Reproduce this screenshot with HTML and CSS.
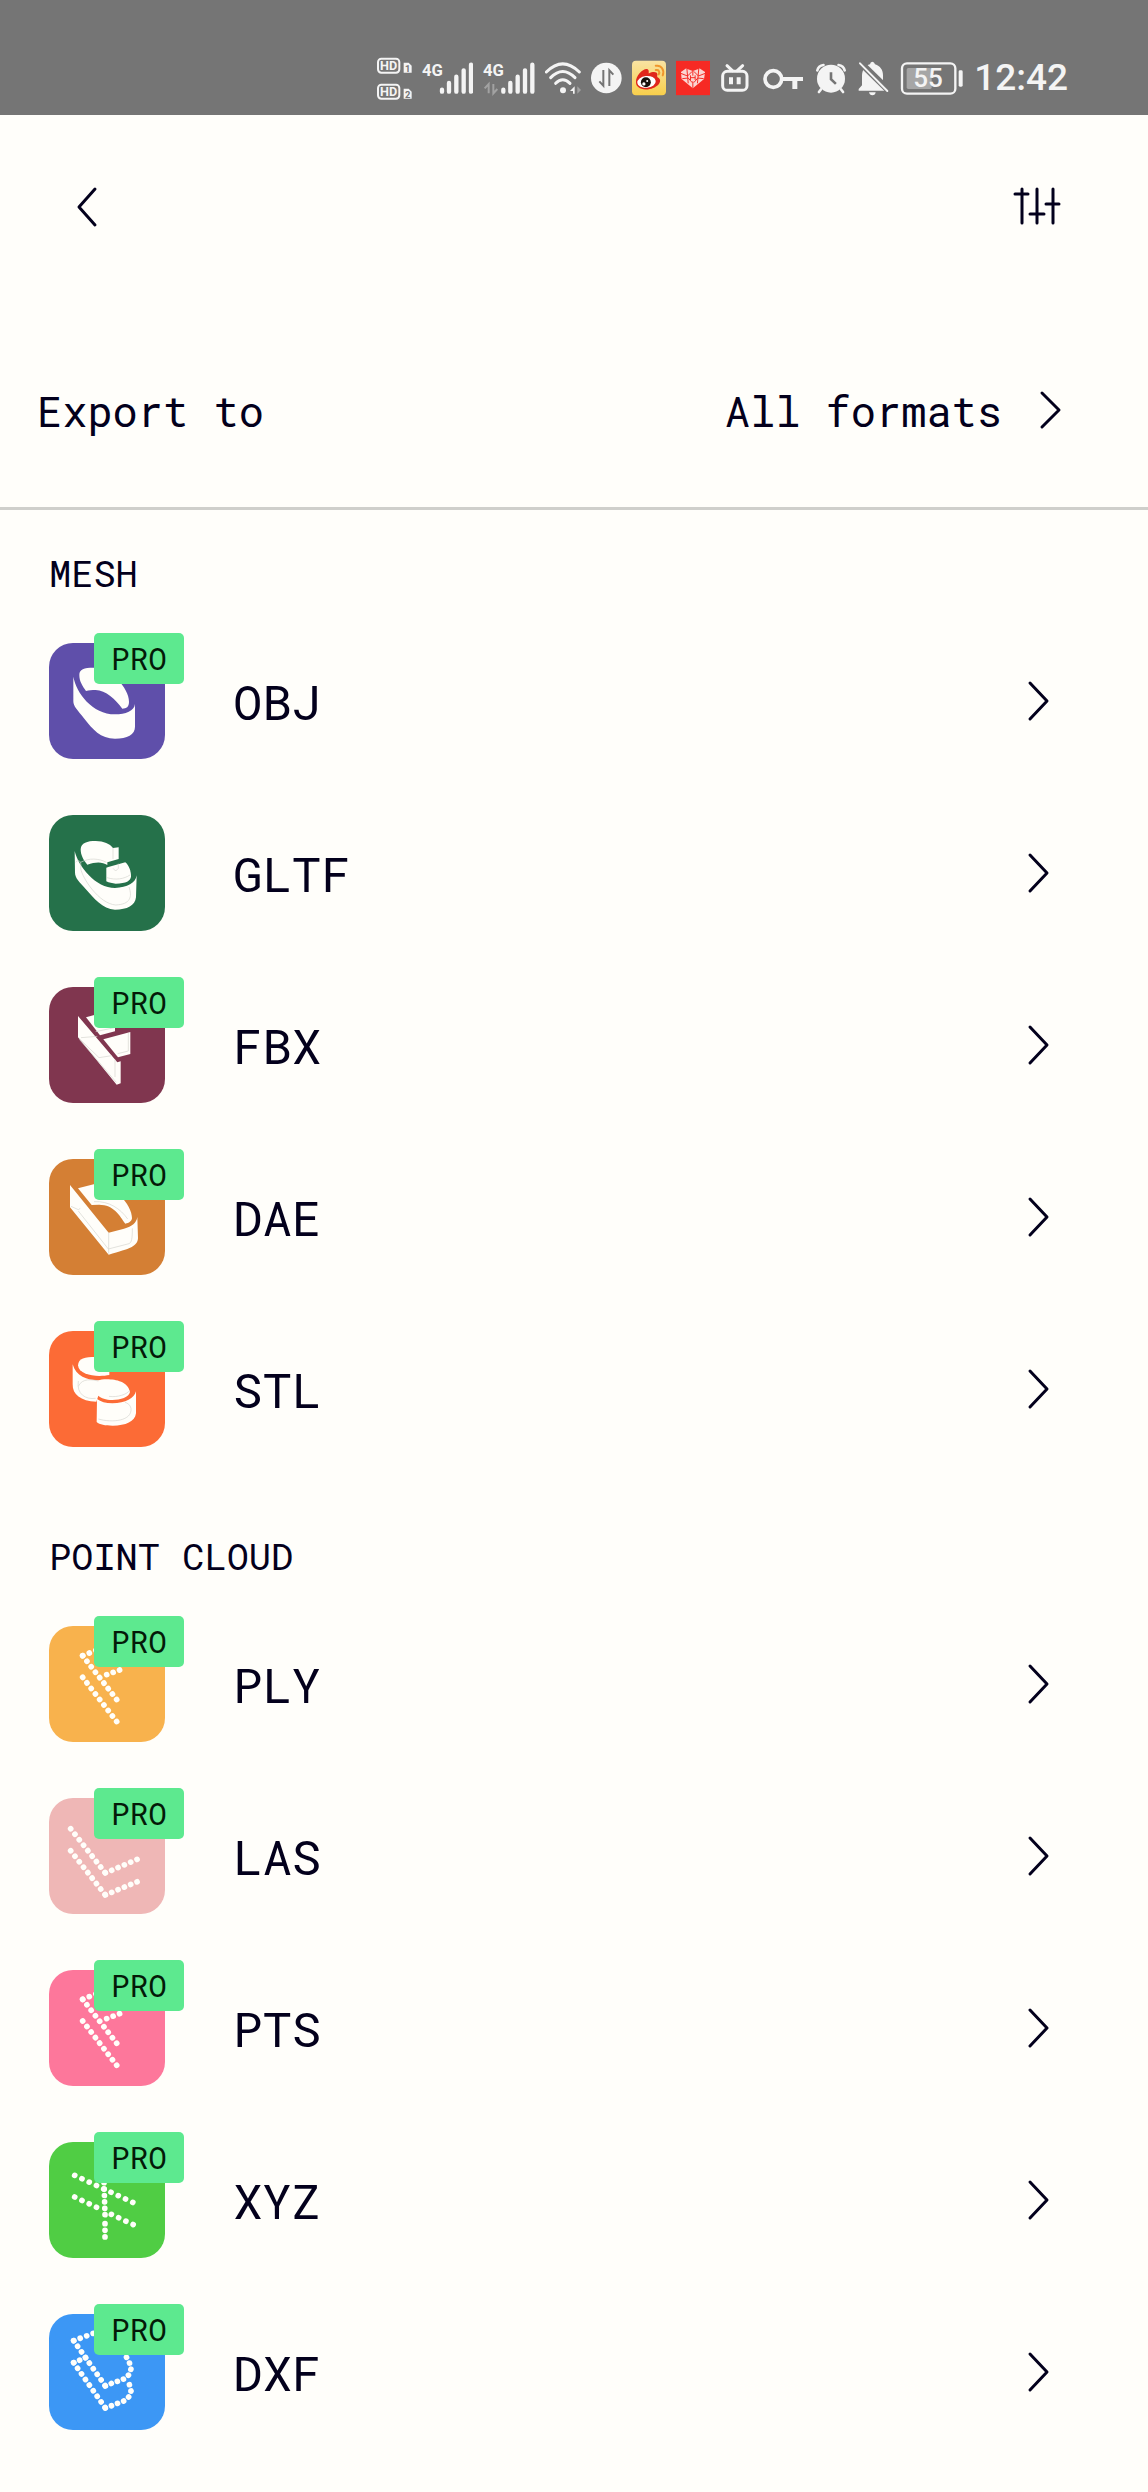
FILE: index.html
```html
<!DOCTYPE html>
<html lang="en">
<head>
    <meta charset="utf-8" />
    <meta name="viewport" content="width=device-width, initial-scale=1" />
    <title>Export</title>
    <link rel="stylesheet" href="styles.css">
</head>
<body>
    <!-- status bar -->
    <div class="statusbar">
        <svg width="35" height="44" viewBox="27 46 105 132">
            <g fill="none" stroke="#f4f4f4" stroke-width="6">
                <rect x="30" y="54" width="64" height="42" rx="10" />
                <rect x="30" y="132" width="64" height="42" rx="10" />
            </g>
            <path d="M107 66h15l9 9v21h-24zM107 144h15l9 9v21h-24z" fill="#f4f4f4" />
            <text class="hd" x="62" y="89" text-anchor="middle">HD</text>
            <text class="hd" x="62" y="167" text-anchor="middle">HD</text>
            <text class="sim" x="119" y="93" text-anchor="middle">1</text>
            <text class="sim" x="119" y="171" text-anchor="middle">2</text>
        </svg>
        <svg width="51" height="44" viewBox="160 46 153 132">
            <text class="net" x="160" y="107">4G</text>
            <path class="bars" d="M220 147v6M241 127v26M263 108v45M285 89v64M307 72v81" />
        </svg>
        <svg width="52" height="44" viewBox="345 46 156 132">
            <text class="net" x="345" y="107">4G</text>
            <path d="M362 158v-28l-12 13M376 130v28l12-13" fill="none" stroke="#a2a2a2" stroke-width="6" />
            <path class="bars" d="M406 147v6M427 127v26M449 108v45M471 89v64M493 72v81" />
        </svg>
        <svg width="36" height="44" viewBox="530 46 108 132">
            <g fill="none" stroke="#f4f4f4" stroke-width="9" stroke-linecap="round">
                <path d="M534 94Q583 45 633 94" />
                <path d="M547 111Q583 74 620 111" />
                <path d="M562 128Q583 106 605 128" />
            </g>
            <circle cx="584" cy="149" r="9" fill="#f4f4f4" />
            <path d="M619 137v22h-5v-8h-9z" fill="#f4f4f4" />
            <path d="M627 137v22l11-11z" fill="#a2a2a2" />
        </svg>
        <svg width="31" height="44" viewBox="669 46 93 132">
            <circle cx="715" cy="112" r="46" fill="#f4f4f4" />
            <path d="M706 88v47l-12-13M724 136V89l12 13" fill="none" stroke="#757575" stroke-width="6" />
        </svg>
        <svg width="34" height="44" viewBox="792 46 103 132">
            <defs>
                <linearGradient id="gold" x1="0" y1="0" x2="0" y2="1">
                    <stop offset="0" stop-color="#f9e3a2" />
                    <stop offset="1" stop-color="#f8cf4c" />
                </linearGradient>
            </defs>
            <rect x="792" y="60" width="103" height="104" rx="12" fill="url(#gold)" />
            <path d="M804 125C803 105 825 83 838 85C845 88 842 96 843 98C855 92 868 92 869 101C869 106 866 109 873 112C886 122 868 146 834 147C815 146 804 138 804 125Z" fill="#e0261c" />
            <ellipse cx="836" cy="124" rx="28" ry="18" fill="#fff" transform="rotate(-6 836 124)" />
            <circle cx="834" cy="125" r="15" fill="#16100c" />
            <circle cx="828" cy="130" r="5" fill="#fff" />
            <circle cx="838" cy="121" r="3" fill="#fff" />
            <path d="M864 75C881 72 891 88 885 104M864 88C873 86 877 93 873 101" fill="none" stroke="#f0962c" stroke-width="6" stroke-linecap="round" />
        </svg>
        <svg width="34" height="44" viewBox="922 46 103 132">
            <rect x="922" y="60" width="103" height="104" fill="#f62a24" />
            <path d="M973 143L939 115L937 94L952 83L973 91L994 83L1010 94L1007 115Z" fill="#fbd5d2" />
            <path d="M973 91v14M973 122v20M937 98l20 8 14-14M1010 98l-20 8-14-14M941 114l18-2 12 14M1006 114l-18-2-12 14M955 84l4 44M991 84l-4 44M966 104v14M980 104v14M966 111h14" fill="none" stroke="#f62a24" stroke-width="3" />
        </svg>
        <svg width="30" height="44" viewBox="8 46 90 132">
            <g fill="none" stroke="#f4f4f4" stroke-width="9" stroke-linecap="round">
                <rect x="16" y="92" width="73" height="57" rx="14" />
                <path d="M29 75l16 15M76 75L60 90" />
                <path d="M41 110v21M64 110v21" stroke-width="12" stroke-linecap="butt" />
            </g>
        </svg>
        <svg width="46" height="44" viewBox="128 46 138 132">
            <circle cx="168" cy="115" r="25" fill="none" stroke="#f4f4f4" stroke-width="11" />
            <path d="M193 109h64v12h-17v24h-15v-24h-32z" fill="#f4f4f4" />
        </svg>
        <svg width="30" height="44" viewBox="293 46 92 132">
            <circle cx="339" cy="114" r="43" fill="#f4f4f4" />
            <g fill="none" stroke="#f4f4f4" stroke-width="8" stroke-linecap="round">
                <path d="M297 89Q300 74 316 72M381 89Q378 74 362 72" />
                <path d="M308 147l-6 8M370 147l6 8" />
            </g>
            <path d="M339 94v22l15 14" fill="none" stroke="#757575" stroke-width="8" />
        </svg>
        <svg width="34" height="44" viewBox="414 46 102 132">
            <path d="M422 150V145L432 134V104C433 87 442 75 456 71Q457 63 463 63Q469 63 471 71C487 76 495 88 495 104V134L504 145V150ZM453 155h20Q472 164 463 164Q455 164 453 155Z" fill="#f4f4f4" />
            <path d="M421 60L514 151" stroke="#757575" stroke-width="20" />
            <path d="M426 68L508 151" stroke="#f4f4f4" stroke-width="6" stroke-linecap="round" />
        </svg>
        <svg width="64" height="44" viewBox="546 46 192 132">
            <rect x="552" y="68" width="160" height="91" rx="15" fill="none" stroke="#f4f4f4" stroke-width="7" />
            <rect x="566" y="82" width="75" height="63" rx="5" fill="#a6a6a6" />
            <rect x="722" y="89" width="12" height="49" rx="4" fill="#f4f4f4" />
            <text class="level" x="630" y="140" text-anchor="middle">55</text>
        </svg>
        <span class="clock">12:42</span>
    </div>

    <!-- top buttons -->
    <header class="toolbar">
        <button type="button" class="iconbtn" aria-label="Back">
            <svg width="24" height="44" viewBox="0 0 24 44"><path class="line" d="M20 4L4 22L20 40" /></svg>
        </button>
        <button type="button" class="iconbtn" aria-label="Filters">
            <svg width="48" height="44" viewBox="0 0 48 44"><path class="line" d="M9 4v34M2 9h13M24 4v34M17 29h14M40 4v34M33 19h13" /></svg>
        </button>
    </header>

    <div class="exportbar">
        <h1 class="exportbar-title">Export to</h1>
        <button type="button" class="formatbtn">
            All formats
            <svg width="24" height="44" viewBox="0 0 24 44"><path class="line" d="M4 4L21 21L4 38" /></svg>
        </button>
    </div>

    <main>
        <section class="group">
            <h2 class="group-title">MESH</h2>
            <ul class="formats">
                <li>
                    <a href="#obj" class="format">
                        <span class="tile obj">
                            <svg viewBox="0 0 348 348">
                                <path d="M73 101C82 150 130 214 198 214C230 214 256 204 258 183V251C258 275 235 287 198 287C155 287 130 258 106 227C85 201 73 190 73 175Z" />
                                <path d="M91 96C91 78 105 74 133 74C185 74 240 135 240 176C240 192 232 196 220 197C200 170 170 141 140 141C128 141 120 142 111 144C100 128 91 115 91 96Z" />
                            </svg>
                            <span class="pro">PRO</span>
                        </span>
                        <span class="name">OBJ</span>
                        <svg width="24" height="44" viewBox="0 0 24 44"><path class="line" d="M4 4L21 22L4 40" /></svg>
                    </a>
                </li>
                <li>
                    <a href="#gltf" class="format">
                        <span class="tile gltf">
                            <svg viewBox="0 0 348 348">
                                <path d="M77 108C88 155 140 219 198 219C235 217 260 205 263 181L261 247C258 272 235 284 198 284C160 282 135 250 110 222C90 200 78 190 78 172Z" />
                                <path d="M95 103C96 83 115 78 140 78C165 79 182 86 192 99L209 97V132L175 142V150C160 140 140 140 115 149C103 135 95 120 95 103Z" />
                                <path d="M178 156L229 142C240 152 246 168 246 184C245 198 232 206 200 206C190 205 180 203 172 199V158Z" />
                                <path class="trace" d="M80 142C90 130 98 140 95 160C100 190 150 266 200 270C245 268 250 245 240 216M192 99V132M192 160L200 168L208 160V146M95 142C120 128 150 130 172 142M174 188C200 196 225 192 243 180" />
                            </svg>
                        </span>
                        <span class="name">GLTF</span>
                        <svg width="24" height="44" viewBox="0 0 24 44"><path class="line" d="M4 4L21 22L4 40" /></svg>
                    </a>
                </li>
                <li>
                    <a href="#fbx" class="format">
                        <span class="tile fbx">
                            <svg viewBox="0 0 348 348">
                                <path d="M87 87L205 226L215 223V289L203 293L87 151Z" />
                                <path d="M111 91L180 72L198 123V133L153 145Z" />
                                <path d="M163 157L244 135V201L207 211Z" />
                                <path class="trace" d="M96 152L145 148M90 154L150 212L188 206M198 218V270M92 158L202 286M238 138V192L206 200M140 134L196 122" />
                            </svg>
                            <span class="pro">PRO</span>
                        </span>
                        <span class="name">FBX</span>
                        <svg width="24" height="44" viewBox="0 0 24 44"><path class="line" d="M4 4L21 22L4 40" /></svg>
                    </a>
                </li>
                <li>
                    <a href="#dae" class="format">
                        <span class="tile dae">
                            <svg viewBox="0 0 348 348">
                                <path d="M63 78L179 221L225 209C250 202 262 192 265 174L267 238C265 262 245 269 179 287L63 145Z" />
                                <path d="M87 88L140 74C190 74 250 135 249 178C248 187 240 192 229 194C212 170 195 137 150 137L128 138Z" />
                                <path class="trace" d="M179 221V284M66 142L88 152L94 148M88 156L178 270L240 254C248 250 250 240 250 208M135 128C180 125 215 150 236 180" />
                            </svg>
                            <span class="pro">PRO</span>
                        </span>
                        <span class="name">DAE</span>
                        <svg width="24" height="44" viewBox="0 0 24 44"><path class="line" d="M4 4L21 22L4 40" /></svg>
                    </a>
                </li>
                <li>
                    <a href="#stl" class="format">
                        <span class="tile stl">
                            <svg viewBox="0 0 348 348">
                                <path d="M71 100C80 135 115 148 148 148C165 142 235 140 243 183C240 199 215 207 190 207C170 206 157 202 148 194L142 212C95 211 70 190 71 160Z" />
                                <path d="M87 103C88 82 108 78 140 78L181 112V132C150 138 90 136 87 103Z" />
                                <path d="M144 204C155 212 170 217 190 217C230 216 256 202 261 181V247C258 272 230 284 191 284C168 284 152 281 143 273Z" />
                                <path class="trace" d="M88 150C82 190 110 206 140 202M88 166C100 140 130 146 148 150M148 264C190 276 250 270 246 232C244 222 236 216 228 214M180 196C205 200 235 190 242 178" />
                            </svg>
                            <span class="pro">PRO</span>
                        </span>
                        <span class="name">STL</span>
                        <svg width="24" height="44" viewBox="0 0 24 44"><path class="line" d="M4 4L21 22L4 40" /></svg>
                    </a>
                </li>
            </ul>
        </section>

        <section class="group">
            <h2 class="group-title">POINT CLOUD</h2>
            <ul class="formats">
                <li>
                    <a href="#ply" class="format">
                        <span class="tile ply">
                            <svg viewBox="0 0 348 348">
                                <path class="dots" pathLength="800" d="M101 89L204 222" />
                                <path class="dots" pathLength="800" d="M101 154L204 288" />
                                <path class="dots" pathLength="200" d="M101 89L141 73" />
                                <path class="dots" pathLength="200" d="M173 146L212 132" />
                            </svg>
                            <span class="pro">PRO</span>
                        </span>
                        <span class="name">PLY</span>
                        <svg width="24" height="44" viewBox="0 0 24 44"><path class="line" d="M4 4L21 22L4 40" /></svg>
                    </a>
                </li>
                <li>
                    <a href="#las" class="format">
                        <span class="tile las">
                            <svg viewBox="0 0 348 348">
                                <path class="dots" pathLength="800" d="M65 92L169 225" />
                                <path class="dots" pathLength="500" d="M169 225L265 184" />
                                <path class="dots" pathLength="800" d="M65 158L169 291" />
                                <path class="dots" pathLength="500" d="M169 291L265 251" />
                            </svg>
                            <span class="pro">PRO</span>
                        </span>
                        <span class="name">LAS</span>
                        <svg width="24" height="44" viewBox="0 0 24 44"><path class="line" d="M4 4L21 22L4 40" /></svg>
                    </a>
                </li>
                <li>
                    <a href="#pts" class="format">
                        <span class="tile pts">
                            <svg viewBox="0 0 348 348">
                                <path class="dots" pathLength="800" d="M101 88L204 221" />
                                <path class="dots" pathLength="800" d="M101 153L204 287" />
                                <path class="dots" pathLength="200" d="M101 88L141 72" />
                                <path class="dots" pathLength="200" d="M173 146L212 131" />
                            </svg>
                            <span class="pro">PRO</span>
                        </span>
                        <span class="name">PTS</span>
                        <svg width="24" height="44" viewBox="0 0 24 44"><path class="line" d="M4 4L21 22L4 40" /></svg>
                    </a>
                </li>
                <li>
                    <a href="#xyz" class="format">
                        <span class="tile xyz">
                            <svg viewBox="0 0 348 348">
                                <path class="dots" pathLength="800" d="M77 100L253 182" />
                                <path class="dots" pathLength="300" d="M77 165L143 196" />
                                <path class="dots" pathLength="300" d="M187 217L253 248" />
                                <path class="dots" pathLength="500" d="M165 122L168 219" />
                                <path class="dots" pathLength="200" d="M168 245L168 285" />
                            </svg>
                            <span class="pro">PRO</span>
                        </span>
                        <span class="name">XYZ</span>
                        <svg width="24" height="44" viewBox="0 0 24 44"><path class="line" d="M4 4L21 22L4 40" /></svg>
                    </a>
                </li>
                <li>
                    <a href="#dxf" class="format">
                        <span class="tile dxf">
                            <svg viewBox="0 0 348 348">
                                <path class="dots" pathLength="800" d="M74 80L169 216" />
                                <path class="dots" pathLength="800" d="M74 146L169 282" />
                                <path class="dots" pathLength="300" d="M74 80L133 58" />
                                <path class="dots" pathLength="200" d="M74 146L110 131" />
                                <path class="dots" pathLength="700" d="M169 216L188 208L208 201L227 194L240 182L246 165L241 145L232 129" />
                                <path class="dots" pathLength="600" d="M169 282L188 275L208 267L227 260L241 247L246 231L241 211" />
                            </svg>
                            <span class="pro">PRO</span>
                        </span>
                        <span class="name">DXF</span>
                        <svg width="24" height="44" viewBox="0 0 24 44"><path class="line" d="M4 4L21 22L4 40" /></svg>
                    </a>
                </li>
            </ul>
        </section>
    </main>
</body>
</html>
```

FILE: styles.css
```css
*{
    padding:0;
    margin:0;
    box-sizing:border-box;
}
body{
    background-color:#fffefa;
    color:#03001c;
    font-family:"Roboto Mono", "DejaVu Sans Mono", monospace;
}
button{
    border:none;
    background:none;
    color:inherit;
    font:inherit;
    cursor:pointer;
}
svg{
    display:block;
    flex-shrink:0;
}
.line{
    fill:none;
    stroke:#03001c;
    stroke-width:3;
    stroke-linecap:round;
    stroke-linejoin:round;
}

/* status bar */
.statusbar{
    display:flex;
    justify-content:flex-end;
    align-items:center;
    gap:10px;
    height:115px;
    padding:40px 80px 0 0;
    background-color:#757575;
    color:#f4f4f4;
    font-family:Roboto, sans-serif;
}
.clock{
    font-size:37px;
    font-weight:500;
    line-height:44px;
}
.hd{
    fill:#f4f4f4;
    font-size:38px;
    font-weight:bold;
}
.sim{
    fill:#757575;
    font-size:28px;
    font-weight:bold;
}
.net{
    fill:#f4f4f4;
    font-family:"Liberation Sans Narrow", Roboto, sans-serif;
    font-size:50px;
    font-weight:bold;
}
.level{
    fill:#f4f4f4;
    font-size:78px;
    font-weight:500;
}
.bars{
    stroke:#f4f4f4;
    stroke-width:13;
    stroke-linecap:round;
}

/* header */
.toolbar{
    display:flex;
    justify-content:space-between;
    align-items:center;
    height:184px;
    padding:0 87px 0 75px;
}
.exportbar{
    display:flex;
    justify-content:space-between;
    align-items:center;
    padding:76px 86px 60px 37px;
    border-bottom:3px solid #cfcfcb;
    font-size:42px;
    line-height:72px;
}
.exportbar-title{
    font-size:inherit;
    font-weight:normal;
}
.formatbtn{
    display:flex;
    align-items:center;
    gap:36px;
}

/* format list */
.group{
    padding:41px 98px 46px 49px;
}
.group-title{
    margin-bottom:48px;
    font-size:37px;
    font-weight:normal;
    line-height:44px;
}
.formats{
    display:flex;
    flex-direction:column;
    gap:56px;
    list-style:none;
}
.format{
    display:flex;
    align-items:center;
    color:inherit;
    text-decoration:none;
}
.name{
    flex-grow:1;
    margin-left:68px;
    font-size:49px;
    line-height:56px;
}
.tile{
    position:relative;
    width:116px;
    height:116px;
    border-radius:24px;
}
.tile svg{
    fill:#fffefa;
}
.tile .trace{
    fill:none;
    stroke:#d5d5cf;
    stroke-width:2;
}
.tile .dots{
    fill:none;
    stroke:#fffefa;
    stroke-width:17;
    stroke-linecap:round;
    stroke-dasharray:1 98;
}
.pro{
    position:absolute;
    top:-10px;
    left:45px;
    width:90px;
    border-radius:5px;
    background-color:#5de98f;
    color:#041a08;
    font-size:31px;
    line-height:51px;
    text-align:center;
}

.obj{ background-color:#5f4faa; }
.gltf{ background-color:#25714a; }
.fbx{ background-color:#80364f; }
.dae{ background-color:#d47f34; }
.stl{ background-color:#fc6b36; }
.ply{ background-color:#f8b24d; }
.las{ background-color:#efb7b6; }
.pts{ background-color:#fd779b; }
.xyz{ background-color:#50cd44; }
.dxf{ background-color:#3c97f5; }
```
